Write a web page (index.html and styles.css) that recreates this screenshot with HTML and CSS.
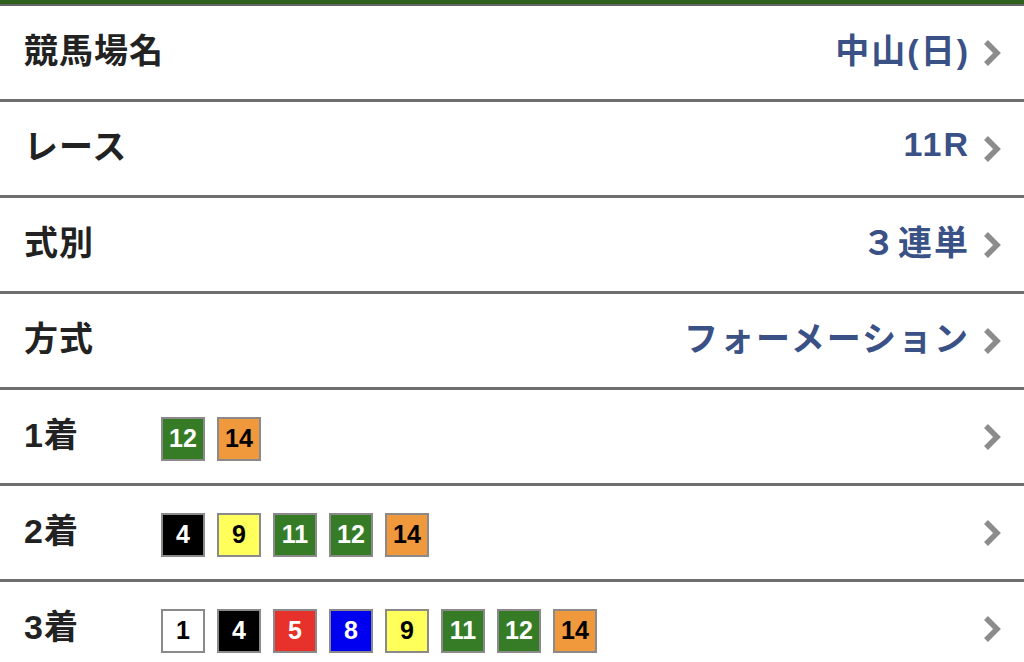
FILE: index.html
```html
<!DOCTYPE html>
<html lang="ja">
<head>
    <meta charset="UTF-8">
    <meta name="viewport" content="width=device-width, initial-scale=1.0">
    <title>投票内容</title>
    <link rel="stylesheet" href="styles.css">
</head>
<body>
    <div class="top-bar"></div>

    <ul class="bet-list">
        <li class="bet-row">
            <span class="label">競馬場名</span>
            <span class="value">中山(日)</span>
            <svg class="chevron" viewBox="0 0 20 30"><polyline points="4,4 15,15 4,26"/></svg>
        </li>
        <li class="bet-row">
            <span class="label">レース</span>
            <span class="value">11R</span>
            <svg class="chevron" viewBox="0 0 20 30"><polyline points="4,4 15,15 4,26"/></svg>
        </li>
        <li class="bet-row">
            <span class="label">式別</span>
            <span class="value">３連単</span>
            <svg class="chevron" viewBox="0 0 20 30"><polyline points="4,4 15,15 4,26"/></svg>
        </li>
        <li class="bet-row">
            <span class="label">方式</span>
            <span class="value">フォーメーション</span>
            <svg class="chevron" viewBox="0 0 20 30"><polyline points="4,4 15,15 4,26"/></svg>
        </li>
        <li class="bet-row">
            <span class="label">1着</span>
            <div class="horses">
                <span class="num num-green">12</span>
                <span class="num num-orange">14</span>
            </div>
            <svg class="chevron" viewBox="0 0 20 30"><polyline points="4,4 15,15 4,26"/></svg>
        </li>
        <li class="bet-row">
            <span class="label">2着</span>
            <div class="horses">
                <span class="num num-black">4</span>
                <span class="num num-yellow">9</span>
                <span class="num num-green">11</span>
                <span class="num num-green">12</span>
                <span class="num num-orange">14</span>
            </div>
            <svg class="chevron" viewBox="0 0 20 30"><polyline points="4,4 15,15 4,26"/></svg>
        </li>
        <li class="bet-row">
            <span class="label">3着</span>
            <div class="horses">
                <span class="num num-white">1</span>
                <span class="num num-black">4</span>
                <span class="num num-red">5</span>
                <span class="num num-blue">8</span>
                <span class="num num-yellow">9</span>
                <span class="num num-green">11</span>
                <span class="num num-green">12</span>
                <span class="num num-orange">14</span>
            </div>
            <svg class="chevron" viewBox="0 0 20 30"><polyline points="4,4 15,15 4,26"/></svg>
        </li>
    </ul>
</body>
</html>
```

FILE: styles.css
```css
body {
    margin: 0;
    background: #fff;
    color: #222;
    font-family: "Liberation Sans", "Noto Sans CJK JP", sans-serif;
    overflow: hidden;
}
.top-bar {
    height: 4px;
    background: #2f5f1d;
    border-bottom: 2px solid #666;
}
.bet-list {
    list-style: none;
    margin: 0;
    padding: 0;
}
.bet-row {
    display: flex;
    align-items: center;
    height: 93px;
    padding: 0 22px 0 24px;
    border-bottom: 3px solid #6e6e6e;
}
.label {
    min-width: 137px;
    flex-shrink: 0;
    margin-bottom: 8px;
    font-size: 34px;
    font-weight: bold;
    letter-spacing: 1px;
    white-space: nowrap;
    color: #222;
}
.value {
    margin-left: auto;
    margin-right: 12px;
    margin-bottom: 8px;
    font-size: 34px;
    font-weight: bold;
    letter-spacing: 2px;
    white-space: nowrap;
    color: #3a5186;
}
.horses {
    display: flex;
    gap: 12px;
    flex: 1;
    margin-top: 4px;
}
.num {
    box-sizing: border-box;
    width: 44px;
    height: 44px;
    display: flex;
    align-items: center;
    justify-content: center;
    border: 2px solid #8a8a8a;
    font-size: 25px;
    font-weight: bold;
}
.num-white { background: #fff; color: #000; }
.num-black { background: #000; color: #fff; }
.num-red { background: #e6322a; color: #fff; }
.num-blue { background: #0000f0; color: #fff; }
.num-yellow { background: #ffff5c; color: #000; }
.num-green { background: #367c27; color: #fff; }
.num-orange { background: #ef983c; color: #000; }
.chevron {
    width: 20px;
    height: 30px;
    flex-shrink: 0;
}
.chevron polyline {
    fill: none;
    stroke: #8c8c8c;
    stroke-width: 5.5;
}
```
